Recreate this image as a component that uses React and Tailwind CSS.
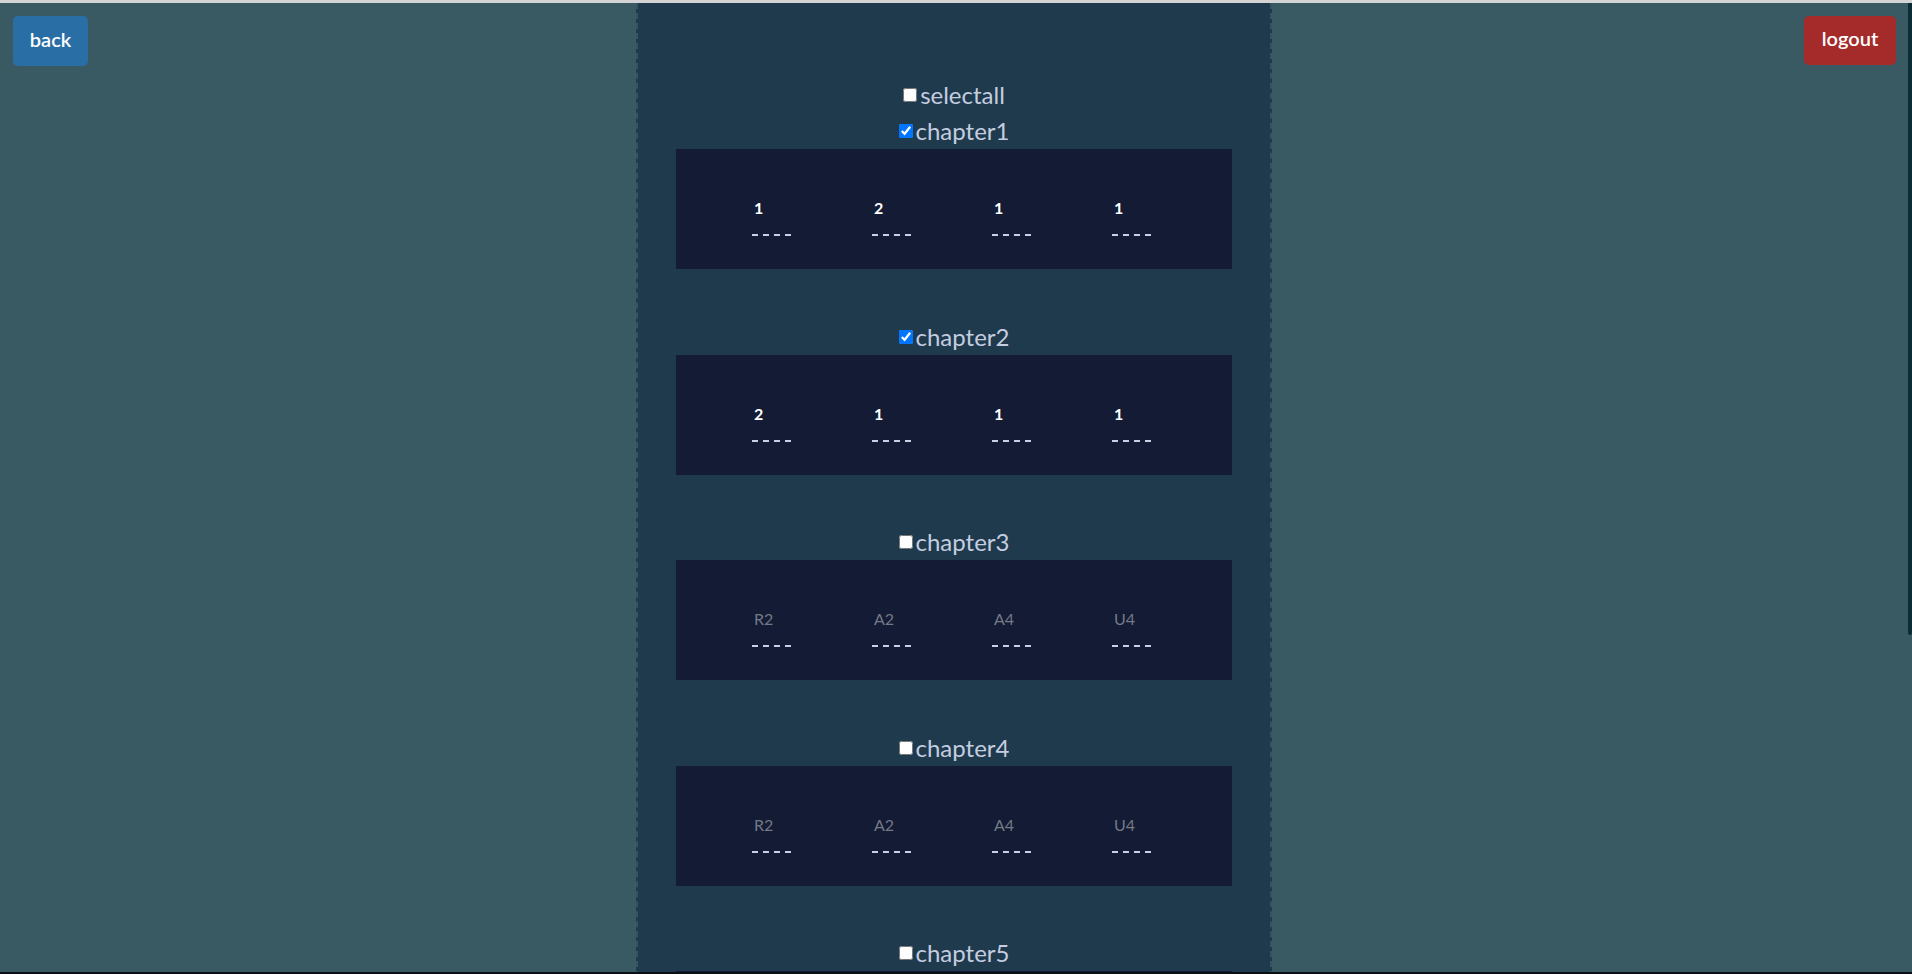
import { useState } from "react";

const chapters = [
  { name: "chapter1", checked: true, values: ["1", "2", "1", "1"] },
  { name: "chapter2", checked: true, values: ["2", "1", "1", "1"] },
  { name: "chapter3", checked: false, values: null },
  { name: "chapter4", checked: false, values: null },
  { name: "chapter5", checked: false, values: null },
  { name: "chapter6", checked: false, values: null },
  { name: "chapter7", checked: false, values: null },
];

const placeholders = ["R2", "A2", "A4", "U4"];

const Dashes = () => (
  <div className="flex gap-[5px] mt-[15px]">
    {[0, 1, 2, 3].map((i) => (
      <div key={i} className="w-[6px] h-[2px] bg-[#c8d0e4]" />
    ))}
  </div>
);

const ChapterBox = ({ values }) => (
  <div className="mx-auto w-[556px] h-[120px] bg-[#131b35] pt-[48px] pl-[76px] flex">
    {placeholders.map((p, i) => (
      <div key={p} className="w-[122px] flex flex-col items-start">
        {values ? (
          <span className="h-[22px] leading-[22px] pl-[2px] text-[16px] font-bold text-white">
            {values[i]}
          </span>
        ) : (
          <span className="h-[22px] leading-[22px] pl-[2px] text-[16px] text-[#737a86]">
            {p}
          </span>
        )}
        <Dashes />
      </div>
    ))}
  </div>
);

const App = () => {
  const [checks, setChecks] = useState(chapters.map((c) => c.checked));
  const [all, setAll] = useState(false);

  const toggle = (i) => {
    const next = [...checks];
    next[i] = !next[i];
    setChecks(next);
  };

  return (
    <div
      className="h-screen flex flex-col bg-[#3a5a63]"
      style={{ fontFamily: "Lato, 'Noto Sans', sans-serif" }}
    >
      <div className="h-[3px] bg-[#d4d4d4] shrink-0" />
      <div className="flex-1 min-h-0 flex">
        <div className="flex-1 overflow-y-auto [scrollbar-width:none]">
          <div className="grid grid-cols-3 min-h-full">
            <div className="pt-[13px] pl-[13px]">
              <button className="w-[75px] h-[50px] pb-[5px] rounded-[5px] bg-[#2a6ea6] text-white text-[20px] font-semibold">
                back
              </button>
            </div>

            <div className="bg-[#1e3a4c] border-x-2 border-dashed border-[#35545f] pt-[74px] pb-[4px]">
              <label className="flex items-center justify-center h-[36px] text-[24px] text-[#c5cde0]">
                <input
                  type="checkbox"
                  checked={all}
                  onChange={() => setAll(!all)}
                  className="w-[14px] h-[14px] mr-[3px]"
                />
                selectall
              </label>

              {chapters.map((c, i) => (
                <div key={c.name} className={i > 0 ? "mt-[49.5px]" : ""}>
                  <label className="flex items-center justify-center h-[36px] text-[24px] text-[#c5cde0]">
                    <input
                      type="checkbox"
                      checked={checks[i]}
                      onChange={() => toggle(i)}
                      className="w-[14px] h-[14px] mr-[3px]"
                    />
                    {c.name}
                  </label>
                  <ChapterBox values={c.values} />
                </div>
              ))}
            </div>

            <div className="pt-[13px] pr-[12px] flex justify-end items-start">
              <button className="w-[92px] h-[49px] pb-[5px] rounded-[5px] bg-[#a52a2a] text-white text-[20px] font-semibold">
                logout
              </button>
            </div>
          </div>
        </div>
        <div className="w-[4px] shrink-0">
          <div className="h-[632px] bg-[#0b2b35] rounded-b-[3px]" />
        </div>
      </div>
      <div className="h-[2px] bg-[#0a0f14] shrink-0" />
    </div>
  );
};

export default App;
